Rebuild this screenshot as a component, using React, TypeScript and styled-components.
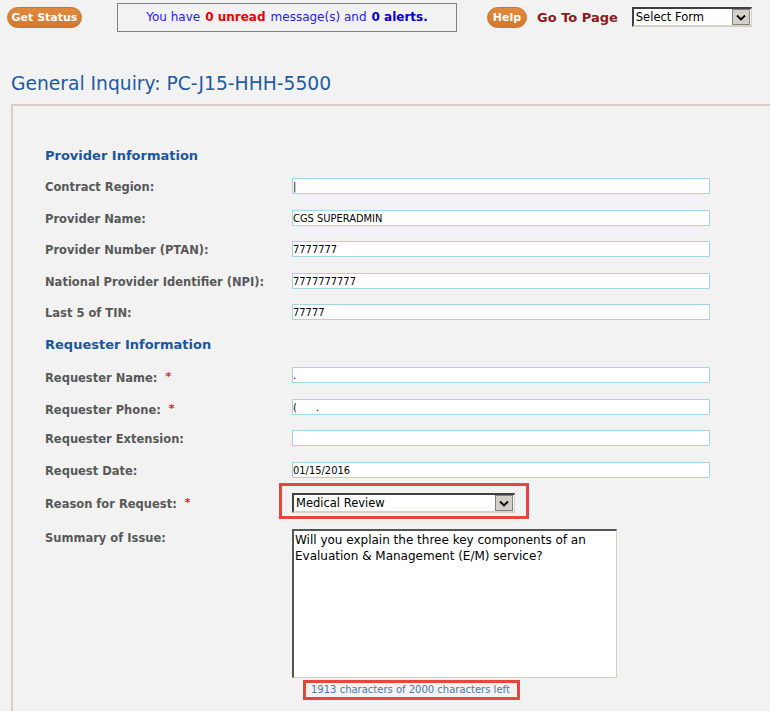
import styled, { createGlobalStyle } from 'styled-components';

const GlobalStyle = createGlobalStyle`
  html, body {
    margin: 0;
    padding: 0;
    background: #f2f2f2;
    font-family: "DejaVu Sans", Verdana, sans-serif;
  }
`;

const Page = styled.div`
  width: 770px;
  height: 711px;
  overflow: hidden;
`;

const TopBar = styled.div`
  display: flex;
  align-items: center;
  height: 34px;
  padding-left: 7px;
`;

const Pill = styled.button<{ $w: number; $gap: number }>`
  width: ${(p) => p.$w}px;
  height: 21px;
  margin-right: ${(p) => p.$gap}px;
  padding: 0;
  border: 1px solid #c9742e;
  border-radius: 11px;
  background: linear-gradient(#e08a3e, #d4772c);
  color: #fff;
  font-family: "DejaVu Sans", Verdana, sans-serif;
  font-weight: bold;
  font-size: 11px;
  line-height: 19px;
  text-align: center;
`;

const MessageBox = styled.div`
  width: 338px;
  height: 27px;
  margin-right: 30px;
  border: 1px solid #808080;
  display: flex;
  align-items: center;
  justify-content: center;
  gap: 5px;
  font-size: 12px;
  color: #2222ee;
`;

const Count = styled.span<{ $red?: boolean }>`
  font-weight: bold;
  color: ${(p) => (p.$red ? '#f00000' : '#0000cc')};
`;

const GoTo = styled.span`
  color: #8b1a1a;
  font-weight: bold;
  font-size: 13px;
  margin-right: 14px;
`;

const FakeSelect = styled.div<{ $w: number }>`
  box-sizing: border-box;
  width: ${(p) => p.$w}px;
  height: 20px;
  display: flex;
  align-items: center;
  background: #fff;
  border-top: 2px solid #404040;
  border-left: 2px solid #404040;
  border-right: 1px solid #d4d0c8;
  border-bottom: 2px solid #d4d0c8;
  font-family: "DejaVu Sans", Tahoma, sans-serif;
  font-size: 11.5px;
  color: #000;
`;

const SelectText = styled.span`
  flex: 1;
  padding-left: 2px;
  white-space: nowrap;
`;

const ArrowBox = styled.span`
  box-sizing: border-box;
  width: 18px;
  height: 16px;
  margin-right: 1px;
  display: flex;
  align-items: center;
  justify-content: center;
  background: #d4d0c8;
  border: 1px solid #808080;
`;

const Title = styled.h1`
  margin: 39px 0 0 11px;
  height: 22px;
  font-size: 18.7px;
  line-height: 22px;
  font-weight: normal;
  color: #1d5ba5;
`;

const Frame = styled.div`
  margin: 9px 0 0 11px;
  border-top: 2px solid #d6d2bf;
  border-left: 2px solid #d6d2bf;
  padding: 40.5px 0 0 32px;
  height: 700px;
`;

const Heading = styled.div`
  height: 31.5px;
  font-size: 13px;
  font-weight: bold;
  line-height: 18px;
  color: #1a56a0;
`;

const Row = styled.div<{ $h?: number }>`
  display: flex;
  align-items: flex-start;
  height: ${(p) => p.$h ?? 31.5}px;
`;

const Label = styled.div`
  width: 247px;
  flex: none;
  font-size: 11.5px;
  font-weight: bold;
  line-height: 19px;
  color: #585858;
`;

const Star = styled.span`
  color: #e8202a;
  margin-left: 8px;
  font-size: 11px;
  vertical-align: 2px;
`;

const TextBox = styled.div`
  box-sizing: border-box;
  width: 418px;
  height: 16px;
  background: #fff;
  border: 1px solid #a6d6e6;
  font-family: "DejaVu Sans Condensed", "DejaVu Sans", Tahoma, sans-serif;
  font-size: 11px;
  line-height: 15px;
  color: #000;
  white-space: nowrap;
`;

const Highlight = styled.div`
  margin: -10px 0 0 -13px;
  padding: 7px 11px 3px 10px;
  border: 3px solid #e5473f;
`;

const Summary = styled.div`
  box-sizing: border-box;
  width: 325px;
  height: 149px;
  background: #fff;
  border-top: 2px solid #555;
  border-left: 2px solid #555;
  border-right: 1px solid #d4d0c8;
  border-bottom: 1px solid #d4d0c8;
  padding: 1px 0 0 1px;
  font-size: 12px;
  line-height: 16px;
  color: #000;
`;

const Counter = styled.div`
  display: inline-block;
  margin-left: 11px;
  padding: 0 7px 0 5px;
  height: 14px;
  border: 3px solid #e5473f;
  font-size: 10px;
  line-height: 14px;
  color: #4a79b4;
  white-space: nowrap;
`;

const Chevron = () => (
  <svg width="10" height="7" viewBox="0 0 10 7">
    <path d="M1 1.5 L5 5.5 L9 1.5" fill="none" stroke="#000" strokeWidth="1.8" />
  </svg>
);

const provider = [
  ['Contract Region:', '|'],
  ['Provider Name:', 'CGS SUPERADMIN'],
  ['Provider Number (PTAN):', '7777777'],
  ['National Provider Identifier (NPI):', '7777777777'],
  ['Last 5 of TIN:', '77777'],
];

const App = () => {
  return (
    <Page>
      <GlobalStyle />
      <TopBar>
        <Pill $w={75} $gap={35}>Get Status</Pill>
        <MessageBox>
          <span>You have</span>
          <Count $red>0 unread</Count>
          <span>message(s) and</span>
          <Count>0 alerts.</Count>
        </MessageBox>
        <Pill $w={40} $gap={10}>Help</Pill>
        <GoTo>Go To Page</GoTo>
        <FakeSelect $w={120}>
          <SelectText>Select Form</SelectText>
          <ArrowBox>
            <Chevron />
          </ArrowBox>
        </FakeSelect>
      </TopBar>

      <Title>General Inquiry: PC-J15-HHH-5500</Title>

      <Frame>
        <Heading>Provider Information</Heading>
        {provider.map(([label, value]) => (
          <Row key={label}>
            <Label>{label}</Label>
            <TextBox>{value}</TextBox>
          </Row>
        ))}

        <Heading>Requester Information</Heading>
        <Row>
          <Label>
            Requester Name:<Star>*</Star>
          </Label>
          <TextBox>.</TextBox>
        </Row>
        <Row>
          <Label>
            Requester Phone:<Star>*</Star>
          </Label>
          <TextBox>(&nbsp;&nbsp;&nbsp;&nbsp;&nbsp;&nbsp;.</TextBox>
        </Row>
        <Row>
          <Label>Requester Extension:</Label>
          <TextBox />
        </Row>
        <Row>
          <Label>Request Date:</Label>
          <TextBox>01/15/2016</TextBox>
        </Row>
        <Row $h={36}>
          <Label>
            Reason for Request:<Star>*</Star>
          </Label>
          <Highlight>
            <FakeSelect $w={223}>
              <SelectText>Medical Review</SelectText>
              <ArrowBox>
                <Chevron />
              </ArrowBox>
            </FakeSelect>
          </Highlight>
        </Row>
        <Row $h={200}>
          <Label>Summary of Issue:</Label>
          <div>
            <Summary>
              Will you explain the three key components of an
              <br />
              Evaluation &amp; Management (E/M) service?
            </Summary>
            <Counter>1913 characters of 2000 characters left</Counter>
          </div>
        </Row>
      </Frame>
    </Page>
  );
};

export default App;
